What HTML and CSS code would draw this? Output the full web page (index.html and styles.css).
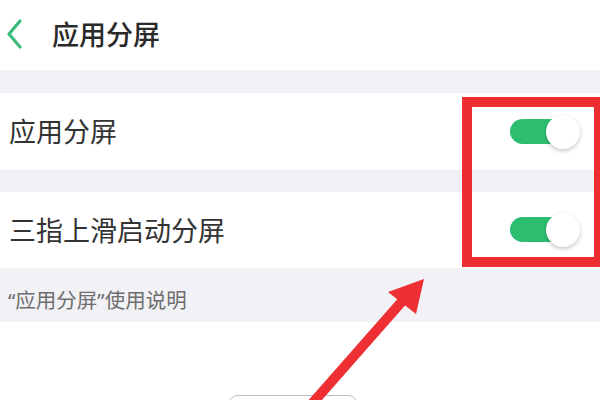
FILE: index.html
```html
<!DOCTYPE html>
<html lang="zh">
<head>
<meta charset="utf-8">
<link rel="stylesheet" href="styles.css">
</head>
<body>
<div class="page">
  <div class="header">
    <svg class="back" width="20" height="30" viewBox="0 0 20 30"><path d="M14 2 L3 15 L14 28" fill="none" stroke="#3cbb7c" stroke-width="3.2" stroke-linecap="round" stroke-linejoin="round"/></svg>
    <span class="title">应用分屏</span>
  </div>
  <div class="band band-a"></div>
  <div class="row row-1">
    <span class="label">应用分屏</span>
    <span class="toggle"><span class="track"></span><span class="knob"></span></span>
  </div>
  <div class="band band-b"></div>
  <div class="row row-2">
    <span class="label">三指上滑启动分屏</span>
    <span class="toggle"><span class="track"></span><span class="knob"></span></span>
  </div>
  <div class="note">“应用分屏”使用说明</div>
  <div class="bottom"><div class="btn"></div></div>

  <div class="redbox"></div>
  <svg class="arrow" width="600" height="400" viewBox="0 0 600 400">
    <line x1="310" y1="406" x2="405" y2="298" stroke="#ee3035" stroke-width="10"/>
    <polygon points="424,279 388,292 416,314" fill="#ee3035"/>
  </svg>
</div>
</body>
</html>
```
FILE: styles.css
```css
html, body { margin: 0; padding: 0; }
body { background: #fff; font-family: "Noto Sans CJK SC", "Noto Sans", sans-serif; }
.page { position: relative; width: 600px; height: 400px; overflow: hidden; background: #fff; }
.header { height: 70px; display: flex; align-items: center; padding-left: 6px; }
.back { margin-top: -2px; }
.title { margin-left: 26px; font-size: 27px; color: #2a2a2a; font-weight: 500; margin-top: -4px; }
.band { background: #f2f1f5; }
.band-a { height: 23px; }
.band-b { height: 22px; }
.row { display: flex; align-items: center; justify-content: space-between; padding: 0 20px 0 9px; }
.row-1 { height: 77px; }
.row-2 { height: 76px; }
.label { font-size: 27px; color: #333; margin-top: -2px; }
.toggle { position: relative; width: 70px; height: 34px; }
.track { position: absolute; left: 0; top: 4px; width: 62px; height: 25px; border-radius: 13px; background: #2dbd71; }
.knob { position: absolute; right: 0; top: 0; width: 34px; height: 34px; border-radius: 50%; background: #fff; box-shadow: 0 2px 4px rgba(0,0,0,0.22); }
.note { height: 54px; background: #f2f1f5; box-sizing: border-box; padding: 20px 0 0 8px; font-family: "Noto Sans", "Noto Sans CJK SC", sans-serif; font-size: 20.5px; line-height: 25px; color: #6e6e6e; }
.bottom { height: 78px; position: relative; }
.btn { position: absolute; left: 228px; top: 73px; width: 128px; height: 30px; border: 1.5px solid #bdbdbd; border-radius: 10px; }
.redbox { position: absolute; left: 462px; top: 97px; width: 142px; height: 170px; box-sizing: border-box; border: 10px solid #ee2d33; }
.arrow { position: absolute; left: 0; top: 0; pointer-events: none; }
```
